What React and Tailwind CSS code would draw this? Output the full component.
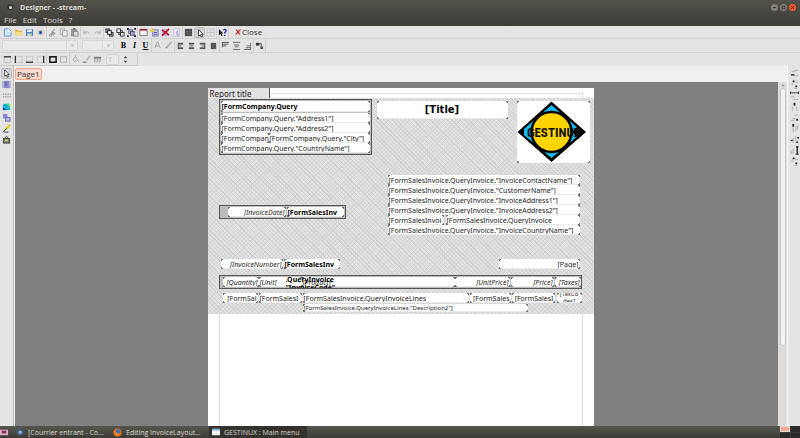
import React from "react";

const INK = "#333";

function Glyph({ children, className = "size-[10px]" }) {
  return (
    <svg viewBox="0 0 10 10" className={className} fill="none" aria-hidden="true">
      {children}
    </svg>
  );
}

const bars = (list, color = INK) =>
  list.map(([x, y, w, h], i) => <rect key={i} x={x} y={y} width={w} height={h ?? 1} fill={color} />);

const icons = {
  new: (
    <>
      <path d="M1.500 1h5L9 3.500V9H1.500z" fill="#cfe6fb" stroke="#5b9bd5" />
      <path d="M6 1v3h3" stroke="#fff" />
    </>
  ),
  open: (
    <>
      <path d="M1 2h3l1 1h4v5H1z" fill="#e9b64a" />
      <path d="M2 4.500h7.500L8.500 8H1z" fill="#fbe08a" />
    </>
  ),
  save: (
    <>
      <rect x="1" y="1" width="8" height="8" rx="1" fill="#4a7fc1" />
      <rect x="2.500" y="1.500" width="5" height="3" fill="#e8f1fb" />
      <rect x="2.500" y="6" width="5" height="3" fill="#c9d9b0" />
    </>
  ),
  preview: (
    <>
      <path d="M0 5q5-5 10 0q-5 4-10 0z" fill="#f4f4f4" stroke="#d9a98a" strokeWidth=".7" />
      <circle cx="5" cy="5" r="2.200" fill="#3f7fc9" />
      <circle cx="5" cy="5" r=".8" fill="#123" />
    </>
  ),
  cut: (
    <>
      <path d="M7 1L3.500 7M4 4l4 2" stroke="#999" strokeWidth="1.200" />
      <circle cx="3" cy="8" r="1.300" stroke="#888" />
      <circle cx="6" cy="6.500" r="1" stroke="#888" />
    </>
  ),
  copy: (
    <>
      <rect x="1.500" y="1" width="5" height="6" fill="#eee" stroke="#aaa" />
      <rect x="4" y="3" width="5" height="6" fill="#eee" stroke="#999" />
    </>
  ),
  paste: (
    <>
      <rect x="1" y="1" width="7" height="8" fill="#999" />
      <rect x="3" y="0" width="3" height="2" fill="#777" />
      <rect x="4" y="4" width="5" height="5" fill="#ddd" stroke="#888" />
    </>
  ),
  undo: <path d="M2 3v3h3M2 6q3-4 6 0v1" stroke="#bbb" strokeWidth="1.200" />,
  redo: <path d="M8 3v3H5M8 6q-3-4-6 0v1" stroke="#bbb" strokeWidth="1.200" />,
  front: (
    <>
      <rect x="1" y="1" width="4" height="4" fill="#999" stroke={INK} />
      <rect x="5" y="5" width="4" height="4" fill="#999" stroke={INK} />
      <rect x="3" y="3" width="4" height="4" fill="#fff" stroke="#111" />
    </>
  ),
  back: (
    <>
      <rect x="3" y="3" width="4" height="4" fill="#ccc" stroke={INK} />
      <rect x="1" y="1" width="4" height="4" fill="#eee" stroke={INK} />
      <rect x="5" y="5" width="4" height="4" fill="#eee" stroke={INK} />
    </>
  ),
  group: (
    <>
      <rect x="2" y="2" width="4" height="4" fill="#bbd" stroke="#335" strokeWidth=".8" />
      <rect x="4" y="4" width="4" height="4" fill="#aac" stroke="#335" strokeWidth=".8" />
      {bars([[0, 0, 2, 2], [8, 0, 2, 2], [0, 8, 2, 2], [8, 8, 2, 2]], "#114")}
    </>
  ),
  page: (
    <>
      <rect x="1" y="1.500" width="8" height="7" fill="#f4f4f4" stroke="#777" />
      <rect x="1" y="1" width="8" height="2" fill="#a32a3d" />
    </>
  ),
  addPage: (
    <>
      <rect x="3" y="2" width="6" height="7" fill="#c9c9ee" stroke="#7a7ab0" />
      <path d="M4 5h4M4 7h4" stroke="#55b" />
      <path d="M0 3h5M2.500 0v5" stroke="#e6c832" strokeWidth="1.500" />
    </>
  ),
  deletePage: (
    <>
      <rect x="1" y="1" width="7" height="8" fill="#b8b8e6" />
      <path d="M1 2l8 6M9 1L1 8.500" stroke="#c4121f" strokeWidth="1.700" />
    </>
  ),
  options: (
    <>
      <rect x="2" y="1" width="6" height="8" fill="#fafaff" stroke="#b8b8c8" />
      <path d="M5 3.500h2M4 5.500h3M5 7.500h2" stroke="#66c" />
    </>
  ),
  grid: (
    <>
      <rect x="1" y="1" width="8" height="8" fill="#444" />
      <path d="M3.500 1v8M6.500 1v8M1 3.500h8M1 6.500h8" stroke="#777" strokeWidth=".6" />
    </>
  ),
  snap: (
    <>
      <path d="M1 2h7M1 5h3" stroke="#bbb" />
      <path d="M4 2v7l2-1.500L7 10l1.300-.7L7.300 7H9z" fill="#fff" stroke="#222" strokeWidth=".9" />
    </>
  ),
  fit: <path d="M1 1h8v8H1zM1 5h8M5 1v8" stroke="#c4c4c4" />,
  help: (
    <>
      <path d="M1 1v7l1.700-1.300L4 9l1-.5L4 6h2z" fill="#111" />
      <path d="M6 2.500q1.500-2 3 0q.3 1.500-1.500 2.500v1M7.500 7.500v1.500" stroke="#2436b8" strokeWidth="1.500" />
    </>
  ),
  color: <path d="M2 8l2.500-7h1L8 8M3 5.500h4" stroke="#aaa" strokeWidth="1.100" />,
  brush: (
    <>
      <path d="M8.500 1L4 6" stroke="#b4b4b4" strokeWidth="2" />
      <path d="M2 8l2-2" stroke="#888" strokeWidth="1.500" />
    </>
  ),
  left: bars([[2, 2, 6, 2], [2, 5, 4], [2, 7, 6, 2], [2, 2, 1, 7]], "#555"),
  center: bars([[2, 2, 6, 2], [3, 5, 4], [2, 7, 6, 2]], "#555"),
  right: bars([[2, 2, 6, 2], [4, 5, 4], [2, 7, 6, 2], [7, 2, 1, 7]], "#555"),
  justify: bars([[2, 2, 6, 7]], "#555"),
  top: bars([[1, 1, 8], [2, 3, 6], [2, 5, 4], [1, 1, 1, 6]], "#555"),
  middle: bars([[1, 1, 8], [2, 4, 6], [3, 6, 4], [1, 9, 8]], "#666"),
  bottom: bars([[1, 9, 8], [3, 7, 5], [4, 5, 4], [8, 2, 1, 7]], "#666"),
  rotate: (
    <>
      <rect x="1" y="2" width="4" height="3" fill="#333" />
      <path d="M5 3h2v3" stroke="#444" />
      <rect x="6" y="6" width="3" height="3" fill="#555" />
    </>
  ),
  edgeTop: <><path d="M1.500 2v7M8.500 2v7M1 8.500h8" stroke="#bbb" /><path d="M1 2h8" stroke="#333" strokeWidth="1.500" /></>,
  edgeLeft: <><path d="M2 1.500h7v7H2" stroke="#c4c4c4" /><path d="M1.500 1v8" stroke="#333" strokeWidth="1.500" /></>,
  edgeBottom: <><path d="M1.500 8V1.500h7V8" stroke="#c4c4c4" /><path d="M1 8h8" stroke="#333" strokeWidth="1.500" /></>,
  edgeRight: <><path d="M8 1.500H1.500v7H8" stroke="#c4c4c4" /><path d="M8.500 1v8" stroke="#333" strokeWidth="1.500" /></>,
  edgeAll: <rect x="2" y="2" width="7" height="6" stroke="#111" strokeWidth="1.700" />,
  edgeNone: <rect x="1.500" y="2" width="7" height="6" stroke="#aaa" />,
  fill: <path d="M2 5l3-3 3 3-3 3zM5 2V0M8.500 6v2" fill="#ddd" stroke="#aaa" />,
  line: <><path d="M9 1L5 6" stroke="#aaa" strokeWidth="1.600" /><path d="M1 8h4" stroke="#777" strokeWidth="1.300" /></>,
  dash: bars([[1, 2, 8, 2], [1, 5, 2], [4, 5, 2], [7, 5, 2], [1, 7, 1], [3, 7, 1], [5, 7, 1], [7, 7, 1]], "#777"),
  pointer: <path d="M3 1v7l1.700-1.400L6 9.300l1.200-.6L6 6.200h2z" fill="#fff" stroke="#333" strokeWidth=".9" />,
  text: <><rect x="2" y="1" width="6" height="8" fill="#8686d8" /><path d="M1 1v8M3 3h3M3 5h3M9 1v8" stroke="#556" strokeWidth=".6" /></>,
  band: <path d="M1 3.500h9M1 6.500h9" stroke="#777" strokeDasharray="1.500 1" />,
  picture: <><rect x="1" y="2" width="8" height="7" fill="#17b6cf" /><path d="M5 2h4v4z" fill="#7de36a" /><path d="M1 9V6l4 3z" fill="#152e9c" /></>,
  sub: <><rect x="1" y="1" width="5" height="5" fill="#8a8ad6" /><rect x="4" y="5" width="5" height="4" fill="#b9b9ee" stroke="#66a" /></>,
  draw: <><path d="M9 1L4 6" stroke="#d8cf1e" strokeWidth="2.500" /><path d="M1 9l4-4M2 9h5" stroke="#333" /></>,
  addin: <><path d="M3 4q2-5 4 0" stroke="#555" /><rect x="1.500" y="4" width="7" height="5" fill="#777" stroke="#444" /><rect x="3.500" y="5" width="3" height="2" fill="#e1d93a" /></>,
  alignL: <>{bars([[5, 1, 4], [2, 2, 4], [5, 7, 4]], "#aaa")}<path d="M1 6.500h4" stroke="#222" strokeWidth="1.500" /></>,
  alignC: <>{bars([[6, 2, 3], [1, 4, 3], [5, 9, 3]], "#aaa")}<path d="M3 1.500h2M6 7h2" stroke="#222" strokeWidth="2" /></>,
  alignW: <>{bars([[1, 6, 4], [4, 9, 5]], "#aaa")}<path d="M0 2h10M.5 .5v3M9.500 .5v3" stroke="#333" /></>,
  alignV: <>{bars([[2, 5, 1, 5], [7, 5, 1, 5]], "#aaa")}<path d="M5 1v3" stroke="#222" strokeWidth="2" /></>,
  alignR: <>{bars([[5, 2, 4], [2, 6, 5], [1, 8, 4]], "#aaa")}<path d="M7 7.500h2" stroke="#222" strokeWidth="2" /></>,
  alignT: <>{bars([[6, 2, 1, 6], [8, 1, 1, 5], [3, 4, 1, 5]], "#aaa")}<path d="M3.500 0v3" stroke="#222" strokeWidth="2" /></>,
  alignM: <>{bars([[3, 3, 1, 6], [6, 1, 1, 6]], "#aaa")}<path d="M1 6h2M8 3h2M7 8h2" stroke="#222" strokeWidth="1.500" /></>,
  alignH: <>{bars([[1, 5, 1, 4], [3, 3, 1, 6]], "#aaa")}<path d="M8 1v8M6.500 1h3M6.500 9h3" stroke="#222" strokeWidth="1.500" /></>,
};

function IconButton({ name, label, pressed }) {
  return (
    <button
      type="button"
      aria-label={label ?? name}
      className={
        pressed
          ? "flex h-[11px] w-[11px] items-center justify-center rounded-[2px] border border-[#bcbcbc] bg-[#d3d3d3]"
          : "flex h-[11px] w-[11px] items-center justify-center"
      }
    >
      <Glyph className="size-[9px] shrink-0">{icons[name]}</Glyph>
    </button>
  );
}

function Group({ names, pressed }) {
  return (
    <div className="flex h-full items-center border-r border-[#cfcfcf]">
      {names.map((n) => (
        <IconButton key={n} name={n} pressed={n === pressed} />
      ))}
    </div>
  );
}

const frames = [
  { x: 11, y: 11, w: 153, h: 56 },
  { x: 11, y: 117, w: 127, h: 14 },
  { x: 11, y: 187, w: 363, h: 14 },
];

const fields = [
  { x: 13, y: 13, w: 149, h: 11, t: "[FormCompany.Query", s: "bold" },
  { x: 13, y: 25, w: 149, h: 10, t: '[FormCompany.Query."Address1"]' },
  { x: 13, y: 35, w: 149, h: 10, t: '[FormCompany.Query."Address2"]' },
  { x: 13, y: 45, w: 48, h: 10, t: "[FormCompan" },
  { x: 61, y: 45, w: 101, h: 10, t: '[FormCompany.Query."City"]' },
  { x: 13, y: 55, w: 149, h: 10, t: '[FormCompany.Query."CountryName"]' },
  { x: 169, y: 13, w: 131, h: 18, t: "[Title]", s: "title" },
  { x: 20, y: 119, w: 58, h: 10, t: "[InvoiceDate]", s: "italicRight" },
  { x: 79, y: 119, w: 57, h: 10, t: "[FormSalesInv", s: "bold" },
  { x: 180, y: 87, w: 192, h: 10, t: '[FormSalesInvoice.QueryInvoice."InvoiceContactName"]' },
  { x: 180, y: 97, w: 192, h: 10, t: '[FormSalesInvoice.QueryInvoice."CustomerName"]' },
  { x: 180, y: 107, w: 192, h: 10, t: '[FormSalesInvoice.QueryInvoice."InvoiceAddress1"]' },
  { x: 180, y: 117, w: 192, h: 10, t: '[FormSalesInvoice.QueryInvoice."InvoiceAddress2"]' },
  { x: 180, y: 127, w: 56, h: 10, t: "[FormSalesInvoi" },
  { x: 238, y: 127, w: 134, h: 10, t: "[FormSalesInvoice.QueryInvoice" },
  { x: 180, y: 137, w: 192, h: 10, t: '[FormSalesInvoice.QueryInvoice."InvoiceCountryName"]' },
  { x: 13, y: 171, w: 62, h: 10, t: "[InvoiceNumber]", s: "italicRight" },
  { x: 76, y: 171, w: 56, h: 10, t: "[FormSalesInv", s: "bold" },
  { x: 291, y: 171, w: 81, h: 10, t: "[Page]", s: "right" },
  { x: 15, y: 189, w: 36, h: 10, t: "[Quantity]", s: "italicRight" },
  { x: 51, y: 189, w: 43, h: 10, t: "[Unit]", s: "italic" },
  { x: 94, y: 189, w: 153, h: 10, t: "[Product]", s: "italic" },
  { x: 247, y: 189, w: 55, h: 10, t: "[UnitPrice]", s: "italicRight" },
  { x: 303, y: 189, w: 43, h: 10, t: "[Price]", s: "italicRight" },
  { x: 347, y: 189, w: 26, h: 10, t: "[Taxes]", s: "italicRight" },
  { x: 15, y: 205, w: 35, h: 10, t: "[FormSal", s: "right" },
  { x: 51, y: 205, w: 43, h: 10, t: "[FormSalesI" },
  { x: 95, y: 205, w: 166, h: 10, t: "[FormSalesInvoice.QueryInvoiceLines" },
  { x: 262, y: 205, w: 41, h: 10, t: "[FormSales", s: "right" },
  { x: 304, y: 205, w: 43, h: 10, t: "[FormSalesI", s: "right" },
  { x: 349, y: 205, w: 25, h: 10, t: "[TaxCo des]", s: "wrap" },
  { x: 95, y: 216, w: 225, h: 8, t: '[FormSalesInvoice.QueryInvoiceLines."Description2"]', s: "small" },
];

const fieldStyles = {
  normal: "justify-start text-[7px]",
  right: "justify-end text-[7px]",
  italic: "justify-start text-[7px] italic",
  italicRight: "justify-end text-[7px] italic",
  bold: "justify-start text-[7px] font-bold text-black",
  title: "justify-center text-[10px] font-bold text-black font-['DejaVu_Sans',sans-serif]",
  small: "justify-start text-[6px]",
  wrap: "justify-center text-[6px] leading-[7px] text-center",
};

function Corners() {
  return (
    <>
      <i className="absolute left-0 top-0 size-[2px] border-l border-t border-[#777]" />
      <i className="absolute right-0 top-0 size-[2px] border-r border-t border-[#777]" />
      <i className="absolute bottom-0 left-0 size-[2px] border-b border-l border-[#777]" />
      <i className="absolute bottom-0 right-0 size-[2px] border-b border-r border-[#777]" />
    </>
  );
}

function Field({ x, y, w, h, t, s = "normal" }) {
  return (
    <div className="absolute bg-white" style={{ left: x, top: y, width: w, height: h }}>
      <div
        className={`flex h-full items-center overflow-hidden border-b border-[#eaeaea] px-px pt-px text-[#222] ${
          s === "wrap" ? "" : "whitespace-nowrap leading-none"
        } ${fieldStyles[s]}`}
      >
        {t}
      </div>
      <Corners />
    </div>
  );
}

function Logo() {
  return (
    <div className="absolute left-[309px] top-[13px] h-[62px] w-[73px] bg-white">
      <svg viewBox="0 0 73 62" className="size-full" role="img" aria-label="GESTINUX">
        <path d="M34.500 0.500L69 31L34.500 61L0.500 31z" fill="#000" />
        <path d="M34.500 4L62 28V34L34.500 57L7 34V28z" fill="#16bdf5" />
        <path d="M62 24v14l-7-7z" fill="#000" />
        <circle cx="34.500" cy="31" r="20" fill="#ffd500" stroke="#000" strokeWidth="2.500" />
        <text
          x="37"
          y="36"
          textAnchor="middle"
          fontSize="13"
          fontWeight="700"
          fill="#111"
          fontFamily="'Roboto Condensed','Roboto',sans-serif"
        >
          GESTINUX
        </text>
      </svg>
      <Corners />
    </div>
  );
}

function Report() {
  return (
    <div className="relative flex w-[386px] shrink-0 flex-col bg-white font-['Noto_Sans','DejaVu_Sans',sans-serif]">
      <div className="flex h-[10px] shrink-0">
        <div className="flex w-[62px] items-center border-r border-[#555] bg-[#e2e2e2] px-[2px] pt-px text-[8px] leading-none text-[#222]">
          Report title
        </div>
        <div className="mr-[11px] mt-[5px] grow border-r border-t border-[#ddd]" />
      </div>
      <div className="h-[216px] shrink-0 bg-[#e3e3e3] bg-[repeating-linear-gradient(45deg,#d2d2d2_0px,#d2d2d2_1px,transparent_1px,transparent_3px),repeating-linear-gradient(-45deg,#d8d8d8_0px,#d8d8d8_1px,transparent_1px,transparent_3px)]" />
      <div className="mx-[11px] grow border-x border-[#ddd]" />
      {frames.map((f) => (
        <div
          key={f.y}
          className="absolute border border-[#555] bg-[#bdbdbd]"
          style={{ left: f.x, top: f.y, width: f.w, height: f.h }}
        />
      ))}
      {fields.map((f) => (
        <Field key={`${f.x}-${f.y}`} {...f} />
      ))}
      <div className="absolute left-[78px] top-[188px] h-[12px] w-[60px] overflow-hidden text-[7px] font-bold leading-[8px] text-black">
        .QueryInvoice "InvoiceCode"
      </div>
      <Logo />
    </div>
  );
}

const leftTools = ["pointer", "text", "band", "picture", "sub", "draw", "addin"];
const rightTools = ["alignL", "alignC", "alignW", "alignV", "alignR", "alignT", "alignM", "alignH", "alignC"];

export default function App() {
  return (
    <div className="flex h-screen flex-col overflow-hidden bg-[#e4e4e4] font-['Open_Sans','Noto_Sans',sans-serif] text-[8px] leading-none text-[#333]">
      <header className="shrink-0 bg-linear-to-b from-[#54524b] to-[#3c3b37] text-[#dfdbd2]">
        <div className="flex h-[14px] items-center pl-[7px] pr-1">
          <span className="flex size-[6px] items-center justify-center rounded-full bg-[#333]">
            <span className="size-[3px] rounded-full bg-[#ddd]" />
          </span>
          <h1 className="ml-[7px] grow text-[7px] font-bold">Designer - -stream-</h1>
          <div className="flex gap-[2px]">
            <button type="button" aria-label="Minimize" className="size-[7px] rounded-full bg-[#85827a]">
              <Glyph className="size-[7px]"><path d="M3 5h4" stroke="#333" strokeWidth="1.500" /></Glyph>
            </button>
            <button type="button" aria-label="Maximize" className="size-[7px] rounded-full bg-[#85827a]">
              <Glyph className="size-[7px]"><path d="M3 3h4v4H3z" stroke="#333" strokeWidth="1.300" /></Glyph>
            </button>
            <button type="button" aria-label="Close window" className="size-[7px] rounded-full bg-[#ee5a2a]">
              <Glyph className="size-[7px]"><path d="M3 3l4 4M7 3L3 7" stroke="#5a1c08" strokeWidth="1.300" /></Glyph>
            </button>
          </div>
        </div>
        <nav className="flex h-[12px] items-center gap-[6px] pl-1 text-[8px]">
          <button type="button">File</button>
          <button type="button">Edit</button>
          <button type="button">Tools</button>
          <button type="button">?</button>
        </nav>
      </header>

      <div className="shrink-0">
        <div className="flex h-[13px] items-center border-b border-[#d2d2d2] pl-[2px]">
          <Group names={["new", "open", "save", "preview"]} />
          <Group names={["cut", "copy", "paste"]} />
          <Group names={["undo", "redo"]} />
          <Group names={["front", "back", "group"]} />
          <Group names={["page", "addPage", "deletePage", "options"]} />
          <Group names={["grid", "snap", "fit"]} pressed="snap" />
          <Group names={["help"]} />
          <button type="button" className="ml-[6px] flex items-center gap-px">
            <Glyph className="size-[6px]"><path d="M2 1l6 8M9 1L1 9" stroke="#c02222" strokeWidth="2" /></Glyph>
            Close
          </button>
        </div>
        <div className="flex h-[14px] items-center border-b border-[#d2d2d2] pl-[2px]">
          <div className="relative mr-1 flex">
            <select aria-label="Font name" disabled className="h-[11px] w-[76px] appearance-none rounded-[2px] border border-[#d6d6d6] bg-[#e9e9e9]" />
            <span className="absolute inset-y-0 right-0 flex w-[12px] items-center justify-center border-l border-[#d6d6d6]">
              <Glyph className="size-[5px]"><path d="M1 3h8L5 8z" fill="#bbb" /></Glyph>
            </span>
          </div>
          <div className="relative mr-1 flex">
            <select aria-label="Font size" disabled className="h-[11px] w-[32px] appearance-none rounded-[2px] border border-[#d6d6d6] bg-[#e9e9e9]" />
            <span className="absolute inset-y-0 right-0 flex w-[12px] items-center justify-center border-l border-[#d6d6d6]">
              <Glyph className="size-[5px]"><path d="M1 3h8L5 8z" fill="#bbb" /></Glyph>
            </span>
          </div>
          <div className="flex h-full items-center border-r border-[#cfcfcf] font-['Liberation_Serif',serif] text-[8px] font-bold text-black">
            <button type="button" className="w-[11px]">B</button>
            <button type="button" className="w-[11px] italic">I</button>
            <button type="button" className="w-[11px] underline">U</button>
          </div>
          <Group names={["color", "brush"]} />
          <Group names={["left", "center", "right", "justify"]} />
          <Group names={["top", "middle", "bottom"]} />
          <Group names={["rotate"]} />
        </div>
        <div className="flex h-[13px] w-[138px] items-center border-b border-r border-[#cacaca] pl-[2px]">
          <Group names={["edgeTop", "edgeLeft", "edgeBottom", "edgeRight"]} />
          <Group names={["edgeAll", "edgeNone"]} />
          <IconButton name="fill" />
          <IconButton name="line" />
          <IconButton name="dash" />
          <input
            aria-label="Line width"
            disabled
            defaultValue="1"
            className="ml-[3px] h-[11px] w-[13px] rounded-[2px] border border-[#d2d2d2] bg-[#e9e9e9] pl-px text-[7px] text-[#aaa]"
          />
          <Glyph className="ml-[2px] size-[9px]"><path d="M3 3.500h4L5 1zM3 6.500h4L5 9z" fill="#444" /></Glyph>
        </div>
      </div>

      <main className="flex min-h-0 grow">
        <aside className="flex w-[14px] shrink-0 flex-col items-center border-r border-[#bbb] pt-[2px]">
          {leftTools.map((n) => (
            <IconButton key={n} name={n} pressed={n === "pointer"} />
          ))}
        </aside>
        <section className="flex min-w-0 grow flex-col bg-[#f1f0ef] pl-px">
          <div className="flex h-[16px] shrink-0 items-center">
            <button type="button" className="flex h-[12px] items-center rounded-[2px] border border-[#f0a58a] bg-[#fbd9cc] px-px text-[8px]">
              Page1
            </button>
          </div>
          <div className="flex min-h-0 grow">
            <div className="flex min-w-0 grow justify-center overflow-hidden border-t border-[#777] bg-[#808080] pl-2 pt-[5px]">
              <Report />
            </div>
            <div className="flex w-[9px] shrink-0 flex-col items-center bg-[#e0dcda]">
              <Glyph className="size-[6px]"><path d="M2 7h6L5 3z" fill="#999" /></Glyph>
              <div className="h-[75%] w-[6px] rounded-full border border-[#c8c4c1] bg-[#f4f3f2]" />
            </div>
          </div>
        </section>
        <aside className="flex w-[13px] shrink-0 flex-col items-center border-l border-white pt-[2px]">
          {rightTools.map((n, i) => (
            <IconButton key={i} name={n} label={`Align ${i + 1}`} />
          ))}
        </aside>
      </main>

      <footer className="flex h-[12px] shrink-0 items-center bg-linear-to-b from-[#57554d] to-[#3c3b37] text-[7px] text-[#dfdbd2]">
        <div className="flex w-[16px] items-center">
          <Glyph className="size-[9px]"><rect y="2" width="9" height="6" fill="#d9b3c8" /><path d="M2 3h5v3H2z" fill="#8c2c5a" /></Glyph>
        </div>
        <button type="button" className="flex w-[97px] items-center gap-1 whitespace-nowrap">
          <Glyph className="size-[8px]"><circle cx="5" cy="5" r="4.500" fill="#3c6080" /><path d="M3 5q2-3 5 0l-3 3z" fill="#9db4c4" /></Glyph>
          [Courrier entrant - Co...
        </button>
        <button type="button" className="flex w-[96px] items-center gap-1 whitespace-nowrap">
          <Glyph className="size-[9px]"><circle cx="5" cy="5" r="4.500" fill="#e8731a" /><circle cx="5.500" cy="4" r="2.500" fill="#3a6fb8" /><path d="M1 3q2 3 5 3l-2 2z" fill="#f7a531" /></Glyph>
          Editing InvoiceLayout...
        </button>
        <button type="button" className="flex h-full w-[98px] items-center gap-1 whitespace-nowrap bg-[#33322e] pl-[3px]">
          <Glyph className="size-[8px]"><rect y="1" width="10" height="8" fill="#f2f2f2" /><rect y="1" width="10" height="2" fill="#7fa6d8" /></Glyph>
          GESTINUX : Main menu
        </button>
        <div className="ml-auto grid h-full w-[20px] grid-cols-2 grid-rows-2 gap-px bg-[#3c3b37]">
          <span className="border border-[#ddd] bg-[#f9a88b]" />
          <span className="bg-[#2a2a28]" />
          <span className="bg-[#2a2a28]" />
          <span className="bg-[#2a2a28]" />
        </div>
      </footer>
    </div>
  );
}
